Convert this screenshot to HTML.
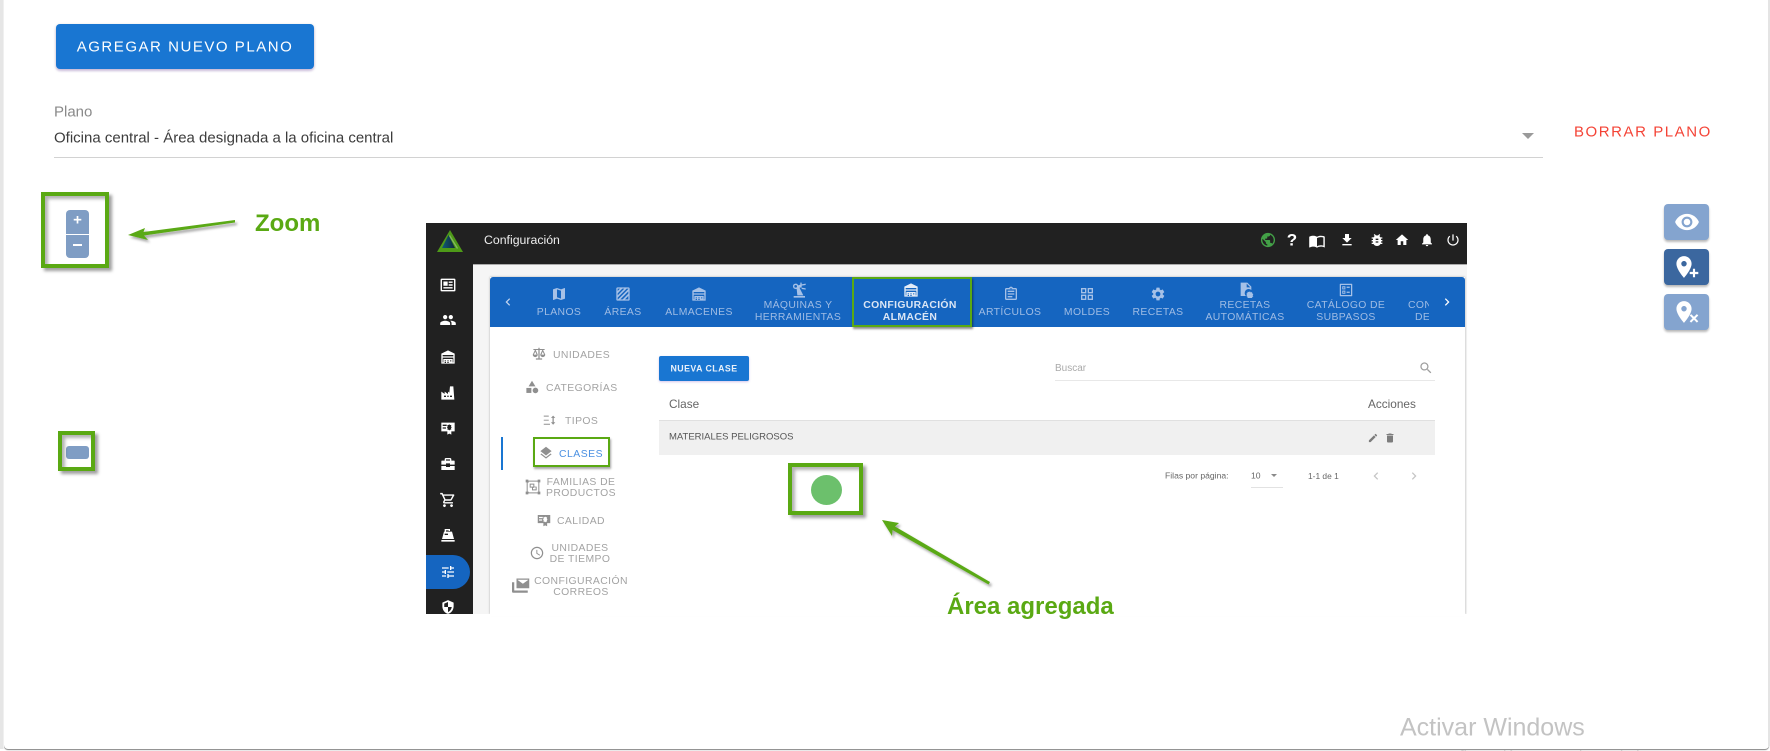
<!DOCTYPE html>
<html lang="es">
<head>
<meta charset="utf-8">
<title>Plano</title>
<style>
html,body{margin:0;padding:0;width:1770px;height:751px;overflow:hidden;background:#fff;font-family:"Liberation Sans",sans-serif}
*{box-sizing:border-box}
.a{position:absolute}
.l,.c{position:absolute;white-space:nowrap;line-height:1}
.l{transform:translateY(-50%)}
.c{transform:translate(-50%,-50%);text-align:center}
svg.i{position:absolute;transform:translate(-50%,-50%);overflow:visible}
#page{left:4px;top:-10px;width:1765px;height:759px;background:#fff;border-radius:4px;box-shadow:0 1px 1px rgba(0,0,0,.5)}
.box{position:absolute;border:4px solid #5aa913;box-shadow:3px 3px 3px rgba(0,0,0,.38),inset 3px 3px 3px rgba(0,0,0,.3)}
.gt{position:absolute;white-space:nowrap;line-height:1;color:#5aa913;font-weight:bold;font-size:24px;transform:translateY(-50%)}
.side{position:absolute;left:1664px;width:45px;height:36px;border-radius:4px;background:#84a4cf;box-shadow:0 2px 2px rgba(0,0,0,.28)}
#shot{position:absolute;left:0;top:0;width:1770px;height:751px;filter:blur(.3px)}
.tab{color:#9fbce4;font-size:10.400px;letter-spacing:.38px;margin-top:1.500px}
.m{color:#a3a3a3;font-size:10.400px;letter-spacing:.42px;margin-top:1.500px}
.w{fill:#fff}.b{fill:#a6c1e7}.g{fill:#8f8f8f}
</style>
</head>
<body>
<svg width="0" height="0" style="position:absolute">
<defs>
<symbol id="news" viewBox="0 0 24 24"><path fill-rule="evenodd" d="M3 3h18a1.500 1.500 0 0 1 1.500 1.500v15a1.500 1.500 0 0 1-1.500 1.500H3a1.500 1.500 0 0 1-1.500-1.500v-15A1.500 1.500 0 0 1 3 3zm.5 2v14h17V5zM5.500 7h6v6h-6zM13 7h5.500v2H13zM13 11h5.500v2H13zM5.500 15h13v2h-13z"/></symbol>
<symbol id="people" viewBox="0 0 24 24"><path d="M16 11c1.660 0 2.990-1.340 2.990-3S17.660 5 16 5c-1.660 0-3 1.340-3 3s1.340 3 3 3zm-8 0c1.660 0 2.990-1.340 2.990-3S9.660 5 8 5C6.340 5 5 6.340 5 8s1.340 3 3 3zm0 2c-2.330 0-7 1.170-7 3.500V19h14v-2.500c0-2.330-4.670-3.500-7-3.500zm8 0c-.29 0-.62.02-.97.05 1.160.84 1.970 1.970 1.970 3.450V19h6v-2.500c0-2.330-4.670-3.500-7-3.500z"/></symbol>
<symbol id="ware" viewBox="0 0 24 24"><path fill-rule="evenodd" d="M12 2 2 7v15h20V7zM4 9h16v2H4zm0 4h16v7h-1v-5H5v5H4zm3 4h2v1.500H7zm4 0h2v1.500h-2zm4 0h2v1.500h-2zm-8 2.500h2V21H7zm4 0h2V21h-2z"/></symbol>
<symbol id="factory" viewBox="0 0 24 24"><path fill-rule="evenodd" d="M2 22V10l5 3.500V10l5 3.500V10l2 1.500L15 2h5l1.500 20zm4-6v2h3v-2zm5 0v2h2v-2zm4 0v2h3v-2z"/></symbol>
<symbol id="quality" viewBox="0 0 24 24"><path fill-rule="evenodd" d="M2 4h20v13h-5v5l-3-1.500-3 1.500v-5H2zm2 3v2h6V7zm0 4v2h5v-2zm10-4.500-1.500 1H11l.5 2-1 1.500 1 1.500-.5 2h1.500l1.500 1 1.500-1H17l-.5-2 1-1.500-1-1.500.5-2h-1.500z"/></symbol>
<symbol id="case" viewBox="0 0 24 24"><path fill-rule="evenodd" d="M9 3h6a2 2 0 0 1 2 2v2h4a1 1 0 0 1 1 1v5h-7v-2H9v2H2V8a1 1 0 0 1 1-1h4V5a2 2 0 0 1 2-2zm0 2v2h6V5zM2 15h7v1.500h6V15h7v6H2z"/></symbol>
<symbol id="cart" viewBox="0 0 24 24"><path d="M15.550 13c.75 0 1.410-.41 1.750-1.030l3.580-6.490c.37-.66-.11-1.480-.87-1.480H5.210l-.94-2H1v2h2l3.600 7.590-1.350 2.440C4.520 15.370 5.480 17 7 17h12v-2H7l1.100-2h7.450zM6.160 6h12.150l-2.760 5H8.530L6.160 6zM7 18c-1.100 0-1.990.9-1.990 2S5.900 22 7 22s2-.9 2-2-.9-2-2-2zm10 0c-1.100 0-1.990.9-1.990 2s.89 2 1.990 2 2-.9 2-2-.9-2-2-2z"/></symbol>
<symbol id="register" viewBox="0 0 24 24"><path fill-rule="evenodd" d="M7 3h8v3h-2v1h5l3 11H3L6 7h1zm2 2v2h4V5zM7 10v2h5v-2zM2 19.500h20V22H2z"/></symbol>
<symbol id="tune" viewBox="0 0 24 24"><path d="M3 17v2h6v-2H3zM3 5v2h10V5H3zm10 16v-2h8v-2h-8v-2h-2v6h2zM7 9v2H3v2h4v2h2V9H7zm14 4v-2H11v2h10zm-6-4h2V7h4V5h-4V3h-2v6z"/></symbol>
<symbol id="shield" viewBox="0 0 24 24"><path fill-rule="evenodd" d="M12 1 3 5v6c0 5.550 3.840 10.740 9 12 5.160-1.260 9-6.450 9-12V5zm0 3v8H6V6.500zm0 8h6c-.5 3.700-3 7-6 8z"/></symbol>
<symbol id="globe" viewBox="0 0 24 24"><path d="M12 2C6.480 2 2 6.480 2 12s4.480 10 10 10 10-4.480 10-10S17.520 2 12 2zm-1 17.930c-3.950-.49-7-3.850-7-7.930 0-.62.08-1.210.21-1.790L9 15v1c0 1.100.9 2 2 2v1.930zm6.900-2.540c-.26-.81-1-1.390-1.900-1.390h-1v-3c0-.55-.45-1-1-1H8v-2h2c.55 0 1-.45 1-1V7h2c1.100 0 2-.9 2-2v-.41c2.930 1.190 5 4.060 5 7.410 0 2.080-.8 3.970-2.100 5.390z"/></symbol>
<symbol id="book" viewBox="0 0 24 24"><path d="M21 5c-1.110-.35-2.330-.5-3.500-.5-1.950 0-4.050.4-5.500 1.500-1.450-1.100-3.550-1.500-5.500-1.500S2.450 4.900 1 6v14.650c0 .25.25.5.5.5.1 0 .15-.05.25-.05C3.100 20.450 5.050 20 6.500 20c1.950 0 4.050.4 5.500 1.500 1.350-.85 3.800-1.500 5.500-1.500 1.650 0 3.350.3 4.750 1.050.1.05.15.05.25.05.25 0 .5-.25.5-.5V6c-.6-.45-1.250-.75-2-1zm0 13.500c-1.100-.35-2.300-.5-3.500-.5-1.700 0-4.150.65-5.500 1.500V8c1.350-.85 3.800-1.500 5.500-1.500 1.200 0 2.400.15 3.500.5v11.500z"/></symbol>
<symbol id="dl" viewBox="0 0 24 24"><path d="M19 9h-4V3H9v6H5l7 7 7-7zM5 18v2h14v-2H5z"/></symbol>
<symbol id="bug" viewBox="0 0 24 24"><path d="M20 8h-2.810c-.45-.78-1.070-1.450-1.820-1.960L17 4.410 15.590 3l-2.170 2.170C12.960 5.060 12.490 5 12 5c-.49 0-.96.06-1.410.17L8.410 3 7 4.410l1.620 1.630C7.880 6.550 7.260 7.220 6.810 8H4v2h2.090c-.05.33-.09.66-.09 1v1H4v2h2v1c0 .34.04.67.09 1H4v2h2.810c1.040 1.790 2.970 3 5.190 3s4.150-1.210 5.190-3H20v-2h-2.090c.05-.33.09-.66.09-1v-1h2v-2h-2v-1c0-.34-.04-.67-.09-1H20V8zm-6 8h-4v-2h4v2zm0-4h-4v-2h4v2z"/></symbol>
<symbol id="home" viewBox="0 0 24 24"><path d="M10 20v-6h4v6h5v-8h3L12 3 2 12h3v8z"/></symbol>
<symbol id="bell" viewBox="0 0 24 24"><path d="M12 22c1.100 0 2-.9 2-2h-4c0 1.100.89 2 2 2zm6-6v-5c0-3.070-1.640-5.640-4.500-6.320V4c0-.83-.67-1.500-1.500-1.500s-1.500.67-1.500 1.500v.68C7.630 5.360 6 7.920 6 11v5l-2 2v1h16v-1l-2-2z"/></symbol>
<symbol id="power" viewBox="0 0 24 24"><path d="M13 3h-2v10h2V3zm4.830 2.170l-1.420 1.420C17.990 7.860 19 9.810 19 12c0 3.870-3.130 7-7 7s-7-3.130-7-7c0-2.190 1.010-4.140 2.580-5.420L6.170 5.170C4.230 6.820 3 9.260 3 12c0 4.970 4.030 9 9 9s9-4.030 9-9c0-2.740-1.230-5.180-3.170-6.830z"/></symbol>
<symbol id="left" viewBox="0 0 24 24"><path d="M15.410 7.410L14 6l-6 6 6 6 1.410-1.410L10.830 12z"/></symbol>
<symbol id="right" viewBox="0 0 24 24"><path d="M8.590 16.590L10 18l6-6-6-6-1.410 1.410L13.170 12z"/></symbol>
<symbol id="map" viewBox="0 0 24 24"><path d="M20.500 3l-.16.03L15 5.100 9 3 3.360 4.900c-.21.07-.36.25-.36.48V20.500c0 .28.22.5.5.5l.16-.03L9 18.900l6 2.100 5.640-1.900c.21-.07.36-.25.36-.48V3.500c0-.28-.22-.5-.5-.5zM15 19l-6-2.110V5l6 2.110V19z"/></symbol>
<symbol id="area" viewBox="0 0 24 24"><path fill-rule="evenodd" d="M4 2h16a2 2 0 0 1 2 2v16a2 2 0 0 1-2 2H4a2 2 0 0 1-2-2V4a2 2 0 0 1 2-2zm0 2v3.500L7.500 4zm7 0L4 11v3L14 4zm6.500 0L4 17.500V20h.5L20 4.500V4zM20 8 8 20h3.500L20 11.500zm0 7-5 5h5z"/></symbol>
<symbol id="crane" viewBox="0 0 24 24"><path fill-rule="evenodd" d="M4 21h17v2.500H4zM7 10.500a4 4 0 1 1 3.700-5.500L14 4V1h2v2.500l6-1v2l-6 1v3l6 1v2l-6-1V8l-3.300.7 5.800 11.300H9.500L8.500 10.400A4 4 0 0 1 7 10.500zm0-2a2 2 0 1 0 0-4 2 2 0 0 0 0 4z"/></symbol>
<symbol id="assign" viewBox="0 0 24 24"><path d="M19 3h-4.180C14.400 1.840 13.300 1 12 1c-1.300 0-2.400.84-2.820 2H5c-1.100 0-2 .9-2 2v14c0 1.100.9 2 2 2h14c1.100 0 2-.9 2-2V5c0-1.100-.9-2-2-2zm-7 0c.55 0 1 .45 1 1s-.45 1-1 1-1-.45-1-1 .45-1 1-1zm7 16H5V5h14v14zM7 7h10v2H7zm0 4h10v2H7zm0 4h7v2H7z"/></symbol>
<symbol id="squares" viewBox="0 0 24 24"><path fill-rule="evenodd" d="M3 3h8v8H3zm2 2v4h4V5zm8-2h8v8h-8zm2 2v4h4V5zM3 13h8v8H3zm2 2v4h4v-4zm8-2h8v8h-8zm2 2v4h4v-4z"/></symbol>
<symbol id="gear" viewBox="0 0 24 24"><path d="M19.140 12.940c.04-.3.06-.61.06-.94 0-.32-.02-.64-.07-.94l2.030-1.580c.18-.14.23-.41.12-.61l-1.920-3.320c-.12-.22-.37-.29-.59-.22l-2.390.96c-.5-.38-1.030-.7-1.620-.94l-.36-2.540c-.04-.24-.24-.41-.48-.41h-3.840c-.24 0-.43.17-.47.41l-.36 2.540c-.59.24-1.130.57-1.620.94l-2.390-.96c-.22-.08-.47 0-.59.22L2.740 8.870c-.12.21-.08.47.12.61l2.030 1.580c-.05.3-.09.63-.09.94s.02.64.07.94l-2.030 1.580c-.18.14-.23.41-.12.61l1.920 3.320c.12.22.37.29.59.22l2.390-.96c.5.38 1.030.7 1.620.94l.36 2.540c.05.24.24.41.48.41h3.840c.24 0 .44-.17.47-.41l.36-2.540c.59-.24 1.130-.56 1.620-.94l2.390.96c.22.08.47 0 .59-.22l1.920-3.320c.12-.22.07-.47-.12-.61l-2.010-1.580zM12 15.600c-1.980 0-3.600-1.620-3.600-3.600s1.620-3.600 3.600-3.600 3.600 1.620 3.600 3.600-1.620 3.600-3.600 3.600z"/></symbol>
<symbol id="filegear" viewBox="0 0 24 24"><path d="M4 1h10l6 6v5a6 6 0 0 0-8 9H4zM13 2.500V8h5.500z"/><path d="M18 14l1 1.500 2-.3.5 2 1.500 1-1 1.800 1 1.500-1.500 1-.5 1.500h-2l-1 1-1.500-1h-2l-.5-2-1.500-1 1-1.500-1-1.800 1.500-1 .5-2 2 .3z"/></symbol>
<symbol id="catalog" viewBox="0 0 24 24"><path fill-rule="evenodd" d="M3 2h18a1 1 0 0 1 1 1v18a1 1 0 0 1-1 1H3a1 1 0 0 1-1-1V3a1 1 0 0 1 1-1zm1 2v16h16V4zm2 2h5v5H6zm1.500 1.500v2h2v-2zM13 6.500h5v2h-5zM6 13h5v5H6zm1.500 1.500v2h2v-2zm5.500 0h5v2h-5z"/></symbol>
<symbol id="scale" viewBox="0 0 24 24"><path fill-rule="evenodd" d="M11 2h2v2h8v1.500h-2.500L22 13a4 4 0 0 1-8 0l3.200-7.500H13V19h4v2H7v-2h4V5.500H6.800L10 13a4 4 0 0 1-8 0l3.500-7.500H3V4h8zM6 8.200 3.800 13h4.400zm12 0L15.800 13h4.400z"/></symbol>
<symbol id="cat" viewBox="0 0 24 24"><path d="M12 2l-5.500 9h11z"/><circle cx="17.500" cy="17.500" r="4.500"/><path d="M3 13.500h8v8H3z"/></symbol>
<symbol id="tipos" viewBox="0 0 24 24"><path d="M2 5h8v1.500H2zM2 11.500h8V13H2zM2 18h10v1.500H2zM17 5l3.500 3.500h-2.500v7h2.500L17 19.500 13.500 15.500h2.500v-7h-2.500z"/></symbol>
<symbol id="layers" viewBox="0 0 24 24"><path d="M11.990 18.540l-7.370-5.730L3 14.070l9 7 9-7-1.630-1.270-7.380 5.740zM12 16l7.360-5.730L21 9l-9-7-9 7 1.630 1.270L12 16z"/></symbol>
<symbol id="family" viewBox="0 0 24 24"><path fill-rule="evenodd" d="M1 1h4v1.500h14V1h4v4h-1.500v14H23v4h-4v-1.500H5V23H1v-4h1.500V5H1zm3 4.500V19h1.500V20H19v-1h1V5h-1V4H5.500v1.500zM7 7h7v4.500h3.500V17H10.500v-4H7zm1.500 1.500v3h4v-3zm3.500 5v2h4v-3h-3v1z"/></symbol>
<symbol id="clock" viewBox="0 0 24 24"><path d="M11.990 2C6.470 2 2 6.480 2 12s4.470 10 9.990 10C17.520 22 22 17.520 22 12S17.520 2 11.990 2zM12 20c-4.420 0-8-3.580-8-8s3.580-8 8-8 8 3.580 8 8-3.580 8-8 8zm.5-13H11v6l5.250 3.150.75-1.230-4.500-2.670z"/></symbol>
<symbol id="mail" viewBox="0 0 24 24"><path fill-rule="evenodd" d="M6 2h17v13H6zm1.500 2L14.500 9 21.500 4v-.3H7.500zM3 7v11h18v3H1.500A1.500 1.500 0 0 1 0 19.500V7z"/></symbol>
<symbol id="search" viewBox="0 0 24 24"><path d="M15.500 14h-.79l-.28-.27C15.410 12.590 16 11.110 16 9.500 16 5.910 13.090 3 9.500 3S3 5.910 3 9.500 5.910 16 9.500 16c1.610 0 3.090-.59 4.230-1.570l.27.28v.79l5 4.990L20.490 19l-4.990-5zm-6 0C7.010 14 5 11.990 5 9.500S7.010 5 9.500 5 14 7.010 14 9.500 11.990 14 9.500 14z"/></symbol>
<symbol id="edit" viewBox="0 0 24 24"><path d="M3 17.250V21h3.750L17.810 9.940l-3.750-3.750L3 17.250zM20.710 7.040c.39-.39.39-1.020 0-1.410l-2.340-2.340c-.39-.39-1.020-.39-1.410 0l-1.830 1.830 3.750 3.750 1.830-1.830z"/></symbol>
<symbol id="del" viewBox="0 0 24 24"><path d="M6 19c0 1.100.9 2 2 2h8c1.100 0 2-.9 2-2V7H6v12zM19 4h-3.500l-1-1h-5l-1 1H5v2h14V4z"/></symbol>
<symbol id="eye" viewBox="0 0 24 24"><path d="M12 4.500C7 4.500 2.730 7.610 1 12c1.730 4.390 6 7.500 11 7.500s9.270-3.110 11-7.500c-1.730-4.390-6-7.500-11-7.500zM12 17c-2.760 0-5-2.240-5-5s2.240-5 5-5 5 2.240 5 5-2.240 5-5 5zm0-8c-1.660 0-3 1.340-3 3s1.340 3 3 3 3-1.340 3-3-1.340-3-3-3z"/></symbol>
<symbol id="pin" viewBox="0 0 24 24"><path d="M12 2C8.130 2 5 5.130 5 9c0 5.250 7 13 7 13s7-7.750 7-13c0-3.870-3.130-7-7-7zm0 9.500c-1.380 0-2.500-1.120-2.500-2.500s1.120-2.500 2.500-2.500 2.500 1.120 2.500 2.500-1.120 2.500-2.500 2.500z"/></symbol>
</defs>
</svg>

<div id="page" class="a"></div>
<div class="a" style="left:0;top:0;width:4px;height:749px;background:linear-gradient(90deg,#e6e6e6 0,#e6e6e6 70%,#f6f6f6 100%)"></div>
<div class="a" style="left:1768px;top:0;width:2px;height:746px;background:#e4e4e4"></div>

<div class="a" style="left:56px;top:24px;width:258px;height:45px;background:#1976d2;border-radius:4px;box-shadow:0 2px 2px rgba(120,60,190,.22),0 1px 3px rgba(0,0,0,.18)"></div>
<div class="c" style="left:185px;top:46.500px;color:#fff;font-size:15px;letter-spacing:1.53px">AGREGAR NUEVO PLANO</div>

<div class="l" style="left:54px;top:112px;color:#8a8a8a;font-size:15px">Plano</div>
<div class="l" style="left:54px;top:138px;color:#3c3c3c;font-size:15px">Oficina central - Área designada a la oficina central</div>
<div class="a" style="left:54px;top:157px;width:1489px;height:1px;background:#d2d2d2"></div>
<svg class="a" style="left:1521px;top:132px" width="14" height="8"><path d="M1 1h12L7 7z" fill="#9a9a9a"/></svg>
<div class="l" style="left:1574px;top:131.500px;color:#f44336;font-size:15px;letter-spacing:1.55px">BORRAR PLANO</div>

<!-- Zoom control -->
<div class="a" style="left:66px;top:210px;width:23px;height:24px;background:#7f9dc4;border-radius:4px 4px 0 0"></div>
<div class="a" style="left:66px;top:235px;width:23px;height:23px;background:#7f9dc4;border-radius:0 0 4px 4px"></div>
<div class="c" style="left:77.500px;top:220px;color:#fff;font-size:15px;font-weight:bold">+</div>
<div class="a" style="left:73px;top:244px;width:9px;height:2px;background:#fff"></div>
<div class="box" style="left:41px;top:192px;width:68px;height:76px"></div>

<div class="a" style="left:66px;top:446px;width:23px;height:13px;background:#7f9dc4;border-radius:3px"></div>
<div class="box" style="left:58px;top:431px;width:37px;height:40px"></div>

<div class="gt" style="left:255px;top:223.500px">Zoom</div>

<!-- Embedded screenshot -->
<div id="shot">
  <div class="a" style="left:426px;top:223px;width:1041px;height:391px;background:#212121;overflow:hidden"></div>
  <div class="a" style="left:473px;top:264px;width:994px;height:350px;background:#f5f5f5;border-top:1px solid #aaa"></div>
  <div class="a" style="left:490px;top:277px;width:975px;height:337px;background:#fff;box-shadow:0 0 2px rgba(0,0,0,.3)"></div>
  <div class="a" style="left:490px;top:277px;width:975px;height:50px;background:#1565c0;border-radius:3px 3px 0 0"></div>
  <div class="a" style="left:426px;top:614px;width:1041px;height:2px;background:#fff"></div>

  <svg class="a" style="left:436px;top:229px" width="28" height="24" viewBox="0 0 28 24">
    <defs><linearGradient id="lg" x1="0" x2="1" y1="0" y2="0"><stop offset="0" stop-color="#0f5a78"/><stop offset="1" stop-color="#10263a"/></linearGradient></defs>
    <path d="M14 1 27 23H1z" fill="#4e9a18"/>
    <path d="M12.500 6 19 19 6 19z" fill="url(#lg)"/>
    <path d="M14 6l8 13-1 1L13 7z" fill="#e9efe6" opacity=".35"/>
  </svg>
  <div class="l" style="left:484px;top:240px;color:#eee;font-size:12.300px">Configuración</div>

  <svg class="i w" style="left:448px;top:285px" width="17" height="17"><use href="#news"/></svg>
  <svg class="i w" style="left:448px;top:320px" width="17" height="17"><use href="#people"/></svg>
  <svg class="i w" style="left:448px;top:357px" width="16" height="16"><use href="#ware"/></svg>
  <svg class="i w" style="left:448px;top:393px" width="16" height="16"><use href="#factory"/></svg>
  <svg class="i w" style="left:448px;top:428px" width="16" height="16"><use href="#quality"/></svg>
  <svg class="i w" style="left:448px;top:464px" width="16" height="16"><use href="#case"/></svg>
  <svg class="i w" style="left:448px;top:500px" width="17" height="17"><use href="#cart"/></svg>
  <svg class="i w" style="left:448px;top:535px" width="16" height="16"><use href="#register"/></svg>
  <div class="a" style="left:426px;top:555px;width:44px;height:34px;background:#1565c0;border-radius:0 17px 17px 0"></div>
  <svg class="i w" style="left:448px;top:572px" width="16" height="16"><use href="#tune"/></svg>
  <svg class="i w" style="left:448px;top:607px" width="15" height="15"><use href="#shield"/></svg>

  <svg class="i" style="left:1268px;top:240px;fill:#43a047" width="17" height="17"><use href="#globe"/></svg>
  <div class="c" style="left:1292px;top:240px;color:#fff;font-size:17px;font-weight:bold">?</div>
  <svg class="i w" style="left:1317px;top:241px" width="17" height="17"><use href="#book"/></svg>
  <svg class="i w" style="left:1347px;top:240px" width="16" height="16"><use href="#dl"/></svg>
  <svg class="i w" style="left:1377px;top:240px" width="16" height="16"><use href="#bug"/></svg>
  <svg class="i w" style="left:1402px;top:240px" width="15" height="15"><use href="#home"/></svg>
  <svg class="i w" style="left:1427px;top:240px" width="15" height="15"><use href="#bell"/></svg>
  <svg class="i w" style="left:1453px;top:240px" width="15" height="15"><use href="#power"/></svg>

  <!-- tabs -->
  <svg class="i" style="left:508px;top:302px;fill:#c3d5ef" width="15" height="15"><use href="#left"/></svg>
  <svg class="i w" style="left:1447px;top:302px" width="15" height="15"><use href="#right"/></svg>

  <svg class="i b" style="left:559px;top:294px" width="16" height="16"><use href="#map"/></svg>
  <div class="c tab" style="left:559px;top:311px">PLANOS</div>
  <svg class="i b" style="left:623px;top:294px" width="16" height="16"><use href="#area"/></svg>
  <div class="c tab" style="left:623px;top:311px">ÁREAS</div>
  <svg class="i b" style="left:699px;top:294px" width="16" height="16"><use href="#ware"/></svg>
  <div class="c tab" style="left:699px;top:311px">ALMACENES</div>
  <svg class="i b" style="left:799px;top:290px" width="16" height="16"><use href="#crane"/></svg>
  <div class="c tab" style="left:798px;top:304px">MÁQUINAS Y</div>
  <div class="c tab" style="left:798px;top:316px">HERRAMIENTAS</div>
  <svg class="i" style="left:911px;top:290px;fill:#e4ecf7" width="16" height="16"><use href="#ware"/></svg>
  <div class="c" style="left:910px;top:304px;margin-top:1.500px;color:#dbe6f5;font-size:10.400px;letter-spacing:.35px;font-weight:bold">CONFIGURACIÓN</div>
  <div class="c" style="left:910px;top:316px;margin-top:1.500px;color:#dbe6f5;font-size:10.400px;letter-spacing:.35px;font-weight:bold">ALMACÉN</div>
  <svg class="i b" style="left:1011px;top:294px" width="16" height="16"><use href="#assign"/></svg>
  <div class="c tab" style="left:1010px;top:311px">ARTÍCULOS</div>
  <svg class="i b" style="left:1087px;top:294px" width="16" height="16"><use href="#squares"/></svg>
  <div class="c tab" style="left:1087px;top:311px">MOLDES</div>
  <svg class="i b" style="left:1158px;top:294px" width="16" height="16"><use href="#gear"/></svg>
  <div class="c tab" style="left:1158px;top:311px">RECETAS</div>
  <svg class="i b" style="left:1246px;top:290px" width="16" height="16"><use href="#filegear"/></svg>
  <div class="c tab" style="left:1245px;top:304px">RECETAS</div>
  <div class="c tab" style="left:1245px;top:316px">AUTOMÁTICAS</div>
  <svg class="i b" style="left:1346px;top:290px" width="15" height="15"><use href="#catalog"/></svg>
  <div class="c tab" style="left:1346px;top:304px">CATÁLOGO DE</div>
  <div class="c tab" style="left:1346px;top:316px">SUBPASOS</div>
  <div class="a" style="left:1400px;top:298px;width:29px;height:26px;overflow:hidden">
    <div class="l tab" style="left:8px;top:6px">CON</div>
    <div class="l tab" style="left:15px;top:18px">DE</div>
  </div>

  <!-- left menu -->
  <svg class="i g" style="left:539px;top:354px" width="15" height="15"><use href="#scale"/></svg>
  <div class="l m" style="left:553px;top:354px">UNIDADES</div>
  <svg class="i g" style="left:532px;top:387px" width="15" height="15"><use href="#cat"/></svg>
  <div class="l m" style="left:546px;top:387px">CATEGORÍAS</div>
  <svg class="i g" style="left:550px;top:420px" width="15" height="15"><use href="#tipos"/></svg>
  <div class="l m" style="left:565px;top:420px">TIPOS</div>
  <div class="a" style="left:501px;top:437px;width:2px;height:33px;background:#1976d2"></div>
  <svg class="i g" style="left:546px;top:453px" width="15" height="15"><use href="#layers"/></svg>
  <div class="l" style="left:559px;top:453px;margin-top:1.500px;color:#4a90e2;font-size:10.400px;letter-spacing:.5px">CLASES</div>
  <svg class="i g" style="left:533px;top:487px" width="16" height="16"><use href="#family"/></svg>
  <div class="c m" style="left:581px;top:481px">FAMILIAS DE</div>
  <div class="c m" style="left:581px;top:492px">PRODUCTOS</div>
  <svg class="i g" style="left:544px;top:520px" width="15" height="15"><use href="#quality"/></svg>
  <div class="l m" style="left:557px;top:520px">CALIDAD</div>
  <svg class="i g" style="left:537px;top:553px" width="15" height="15"><use href="#clock"/></svg>
  <div class="c m" style="left:580px;top:547px">UNIDADES</div>
  <div class="c m" style="left:580px;top:558px">DE TIEMPO</div>
  <svg class="i g" style="left:521px;top:586px" width="18" height="18"><use href="#mail"/></svg>
  <div class="c m" style="left:581px;top:580px">CONFIGURACIÓN</div>
  <div class="c m" style="left:581px;top:591px">CORREOS</div>

  <!-- content -->
  <div class="a" style="left:659px;top:356px;width:90px;height:25px;background:#1976d2;border-radius:2px;box-shadow:0 1px 2px rgba(110,60,190,.3)"></div>
  <div class="c" style="left:704px;top:368.500px;color:#e8f0fa;font-size:8.800px;letter-spacing:.45px;font-weight:bold">NUEVA CLASE</div>
  <div class="l" style="left:1055px;top:369px;color:#aaa;font-size:10px">Buscar</div>
  <div class="a" style="left:1055px;top:380px;width:380px;height:1px;background:#e8e8e8"></div>
  <svg class="i" style="left:1426px;top:368px;fill:#9e9e9e" width="15" height="15"><use href="#search"/></svg>

  <div class="l" style="left:669px;top:405px;color:#666;font-size:11.800px">Clase</div>
  <div class="l" style="left:1368px;top:405px;color:#666;font-size:11.800px">Acciones</div>
  <div class="a" style="left:659px;top:420px;width:776px;height:35px;background:#f0f0f0;border-top:1px solid #e0e0e0"></div>
  <div class="l" style="left:669px;top:437px;color:#555;font-size:9.500px">MATERIALES PELIGROSOS</div>
  <svg class="i" style="left:1373px;top:438px;fill:#7c7c7c" width="11" height="11"><use href="#edit"/></svg>
  <svg class="i" style="left:1390px;top:438px;fill:#7c7c7c" width="12" height="12"><use href="#del"/></svg>

  <div class="l" style="left:1165px;top:476px;color:#666;font-size:8.600px">Filas por página:</div>
  <div class="l" style="left:1251px;top:476px;color:#666;font-size:8.600px">10</div>
  <svg class="a" style="left:1270px;top:473px" width="8" height="5"><path d="M1 1h6L4 4z" fill="#8a8a8a"/></svg>
  <div class="a" style="left:1251px;top:487px;width:32px;height:1px;background:#e2e2e2"></div>
  <div class="l" style="left:1308px;top:476px;color:#666;font-size:8.400px">1-1 de 1</div>
  <svg class="i" style="left:1376px;top:476px;fill:#c4c4c4" width="15" height="15"><use href="#left"/></svg>
  <svg class="i" style="left:1414px;top:476px;fill:#c4c4c4" width="15" height="15"><use href="#right"/></svg>
</div>

<div class="a" style="left:811px;top:475px;width:31px;height:30px;border-radius:50%;background:#6cc06c"></div>

<!-- green annotations -->
<div class="a" style="left:852px;top:277px;width:120px;height:50px;border:2px solid #5aa913;box-shadow:1px 2px 2px rgba(0,0,0,.45)"></div>
<div class="a" style="left:533px;top:437px;width:77px;height:30px;border:2px solid #5aa913;box-shadow:1px 2px 2px rgba(0,0,0,.35)"></div>
<div class="box" style="left:788px;top:463px;width:75px;height:52px"></div>

<svg class="a" style="left:0;top:0;overflow:visible" width="1770" height="751">
  <defs><filter id="ds" x="-20%" y="-20%" width="150%" height="150%"><feDropShadow dx="2" dy="2.500" stdDeviation="1.200" flood-color="#000" flood-opacity=".35"/></filter></defs>
  <g fill="#5aa913" filter="url(#ds)">
    <polygon points="128,235 145,228 143.500,232 235,220 235,222.500 144,235.500 148,240"/>
    <polygon points="882,520 899,523 895,526.500 990,582 988.500,584.500 892.500,530 892,536"/>
  </g>
</svg>
<div class="gt" style="left:947px;top:607px">Área agregada</div>

<!-- Right side buttons -->
<div class="side" style="top:204px"></div>
<svg class="i" style="left:1686.500px;top:222px;fill:#fff" width="26" height="26"><use href="#eye"/></svg>
<div class="side" style="top:249px;background:#3b679f"></div>
<svg class="i" style="left:1683.500px;top:267px;fill:#fff" width="26" height="26"><use href="#pin"/></svg>
<svg class="a" style="left:1689px;top:267.500px" width="10" height="10" viewBox="0 0 14 14"><path d="M5.500 1h3v4.500H13v3H8.500V13h-3V8.500H1v-3h4.500z" fill="#fff"/></svg>
<div class="side" style="top:294px"></div>
<svg class="i" style="left:1683.500px;top:312px;fill:#fff" width="26" height="26"><use href="#pin"/></svg>
<svg class="a" style="left:1689px;top:312.500px" width="10" height="10" viewBox="0 0 14 14"><path d="M3 1.500 7 5.500l4-4L13 3.500 9 7.500l4 4-2 2-4-4-4 4-2-2 4-4-4-4z" fill="#fff"/></svg>

<div class="l" style="left:1400px;top:728px;color:#c3c3c3;font-size:25px">Activar Windows</div>
<div class="a" style="left:1400px;top:750px;width:300px;height:1px;overflow:hidden"><div style="color:#ccc;font-size:14.500px;white-space:nowrap;line-height:14px">Ve a Configuración para activar Windows.</div></div>
</body>
</html>
